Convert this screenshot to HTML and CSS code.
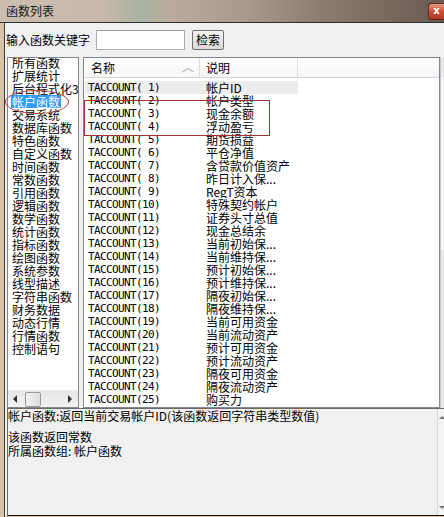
FILE: index.html
```html
<!DOCTYPE html>
<html lang="zh-CN">
<head>
<meta charset="utf-8">
<title>函数列表</title>
<link rel="stylesheet" href="styles.css">
</head>
<body>
<div class="titlebar">
  <span class="title">函数列表</span>
  <span class="close">x</span>
</div>
<div class="win">
  <div class="frame-l"></div>
  <div class="client">
    <div class="search">
      <span class="label">输入函数关键字</span>
      <div class="input"></div>
      <div class="btn">检索</div>
    </div>
    <div class="main">
      <div class="list">
        <div class="items">
          <div class="item">所有函数</div>
          <div class="item">扩展统计</div>
          <div class="item">后台程式化3</div>
          <div class="item sel"><span>帐户函数</span></div>
          <div class="item">交易系统</div>
          <div class="item">数据库函数</div>
          <div class="item">特色函数</div>
          <div class="item">自定义函数</div>
          <div class="item">时间函数</div>
          <div class="item">常数函数</div>
          <div class="item">引用函数</div>
          <div class="item">逻辑函数</div>
          <div class="item">数学函数</div>
          <div class="item">统计函数</div>
          <div class="item">指标函数</div>
          <div class="item">绘图函数</div>
          <div class="item">系统参数</div>
          <div class="item">线型描述</div>
          <div class="item">字符串函数</div>
          <div class="item">财务数据</div>
          <div class="item">动态行情</div>
          <div class="item">行情函数</div>
          <div class="item">控制语句</div>
        </div>
        <div class="hscroll">
          <span class="arr-l"></span>
          <span class="thumb"></span>
          <span class="track"></span>
          <span class="arr-r"></span>
        </div>
      </div>
      <div class="table">
        <div class="thead">
          <div class="h1">名称<span class="sort">︿</span></div>
          <div class="h2">说明</div>
          <div class="h3"></div>
        </div>
        <div class="tbody">
          <div class="row first"><span class="c1">TACCOUNT( 1)</span><span class="c2">帐户ID</span></div>
          <div class="row"><span class="c1">TACCOUNT( 2)</span><span class="c2">帐户类型</span></div>
          <div class="row"><span class="c1">TACCOUNT( 3)</span><span class="c2">现金余额</span></div>
          <div class="row"><span class="c1">TACCOUNT( 4)</span><span class="c2">浮动盈亏</span></div>
          <div class="row"><span class="c1">TACCOUNT( 5)</span><span class="c2">期货损益</span></div>
          <div class="row"><span class="c1">TACCOUNT( 6)</span><span class="c2">平仓净值</span></div>
          <div class="row"><span class="c1">TACCOUNT( 7)</span><span class="c2">含贷款价值资产</span></div>
          <div class="row"><span class="c1">TACCOUNT( 8)</span><span class="c2">昨日计入保...</span></div>
          <div class="row"><span class="c1">TACCOUNT( 9)</span><span class="c2">RegT资本</span></div>
          <div class="row"><span class="c1">TACCOUNT(10)</span><span class="c2">特殊契约帐户</span></div>
          <div class="row"><span class="c1">TACCOUNT(11)</span><span class="c2">证券头寸总值</span></div>
          <div class="row"><span class="c1">TACCOUNT(12)</span><span class="c2">现金总结余</span></div>
          <div class="row"><span class="c1">TACCOUNT(13)</span><span class="c2">当前初始保...</span></div>
          <div class="row"><span class="c1">TACCOUNT(14)</span><span class="c2">当前维持保...</span></div>
          <div class="row"><span class="c1">TACCOUNT(15)</span><span class="c2">预计初始保...</span></div>
          <div class="row"><span class="c1">TACCOUNT(16)</span><span class="c2">预计维持保...</span></div>
          <div class="row"><span class="c1">TACCOUNT(17)</span><span class="c2">隔夜初始保...</span></div>
          <div class="row"><span class="c1">TACCOUNT(18)</span><span class="c2">隔夜维持保...</span></div>
          <div class="row"><span class="c1">TACCOUNT(19)</span><span class="c2">当前可用资金</span></div>
          <div class="row"><span class="c1">TACCOUNT(20)</span><span class="c2">当前流动资产</span></div>
          <div class="row"><span class="c1">TACCOUNT(21)</span><span class="c2">预计可用资金</span></div>
          <div class="row"><span class="c1">TACCOUNT(22)</span><span class="c2">预计流动资产</span></div>
          <div class="row"><span class="c1">TACCOUNT(23)</span><span class="c2">隔夜可用资金</span></div>
          <div class="row"><span class="c1">TACCOUNT(24)</span><span class="c2">隔夜流动资产</span></div>
          <div class="row"><span class="c1">TACCOUNT(25)</span><span class="c2">购买力</span></div>
        </div>
      </div>
      <div class="vstrip"><div class="vthumb"></div></div>
      <div class="ring"></div>
      <div class="mark"></div>
    </div>
    <div class="desc">
      <div class="dtext">
        <div class="dline">帐户函数:返回当前交易帐户ID(该函数返回字符串类型数值)</div>
        <div class="dline gap">该函数返回常数</div>
        <div class="dline">所属函数组: 帐户函数</div>
      </div>
      <div class="dscroll">
        <span class="up"></span>
        <span class="down"></span>
      </div>
    </div>
  </div>
</div>
</body>
</html>
```

FILE: styles.css
```css
* { box-sizing: border-box; }
html, body { margin: 0; padding: 0; }
body {
  width: 444px;
  height: 517px;
  overflow: hidden;
  background: #d6bfa4;
  font-family: "Noto Sans CJK SC", "Noto Sans", sans-serif;
  font-size: 12px;
  color: #000;
}
.titlebar {
  height: 22px;
  display: flex;
  align-items: flex-start;
  justify-content: space-between;
  background: linear-gradient(90deg, #cbbdb0 0%, #c6b8aa 24%, #a7b2a2 32%, #b9ab9d 38%, #a89a8c 55%, #8c7d71 72%, #76685d 88%, #6a5c52 100%);
}
.title {
  padding-left: 6px;
  line-height: 22px;
  font-size: 12px;
  color: #1a1a1a;
}
.close {
  width: 16px;
  height: 17px;
  margin-top: 3px;
  border: 1px solid #5a2a20;
  border-right: none;
  border-radius: 3px 0 0 3px;
  background: linear-gradient(#e59a86, #c9513a 50%, #b33a24);
  color: #fff;
  font-family: "DejaVu Sans", sans-serif;
  font-weight: bold;
  font-size: 10px;
  line-height: 14px;
  text-align: center;
}
.win {
  display: flex;
  height: 495px;
  border-top: 1px solid #2f2f2f;
}
.frame-l {
  flex: none;
  width: 5px;
  background: #d9c2a7;
  border-right: 1px solid #3a3a3a;
}
.client {
  flex: none;
  width: 439px;
  height: 493px;
  background: #f0f0f0;
  display: flex;
  flex-direction: column;
}
.search {
  display: flex;
  align-items: center;
  height: 20px;
  margin-top: 7px;
  padding-left: 1px;
}
.label {
  width: 90px;
  line-height: 20px;
  white-space: nowrap;
}
.input {
  width: 89px;
  height: 20px;
  border: 1px solid #abadb3;
  border-top-color: #a0a0a0;
  background: #fff;
}
.btn {
  margin-left: 7px;
  width: 32px;
  height: 20px;
  border: 1px solid #707070;
  border-radius: 2px;
  background: linear-gradient(#f4f4f4, #e7e7e7 50%, #dadada);
  text-align: center;
  line-height: 18px;
}
.main {
  position: relative;
  display: flex;
  height: 351px;
  margin-top: 7px;
}
.list {
  flex: none;
  margin-left: 2px;
  width: 72px;
  border: 1px solid #828790;
  background: #fff;
  display: flex;
  flex-direction: column;
  overflow: hidden;
}
.items {
  flex: 1;
  overflow: hidden;
  padding-left: 4px;
  margin-top: -2px;
}
.item {
  height: 13px;
  line-height: 13px;
  white-space: nowrap;
}
.item.sel span {
  display: inline-block;
  background: #3399ff;
  color: #fff;
  padding: 0 1px;
  margin-left: -1px;
}
.hscroll {
  flex: none;
  height: 17px;
  display: flex;
  align-items: center;
  background: linear-gradient(#e6e6e6, #f2f2f2);
  border-top: 1px solid #ececec;
}
.arr-l {
  width: 0;
  height: 0;
  margin-left: 5px;
  border-top: 4px solid transparent;
  border-bottom: 4px solid transparent;
  border-right: 4px solid #333;
}
.thumb {
  width: 16px;
  height: 15px;
  margin-left: 8px;
  border: 1px solid #9b9b9b;
  border-radius: 2px;
  background: linear-gradient(90deg, #f2f2f2, #dedede);
}
.track { flex: 1; }
.arr-r {
  width: 0;
  height: 0;
  margin-right: 6px;
  border-top: 4px solid transparent;
  border-bottom: 4px solid transparent;
  border-left: 4px solid #333;
}
.table {
  flex: none;
  margin-left: 4px;
  width: 357px;
  border: 1px solid #828790;
  background: #fff;
  overflow: hidden;
}
.thead {
  display: flex;
  height: 20px;
  border-bottom: 1px solid #d5d5d5;
  background: linear-gradient(#ffffff, #f4f5f6);
  line-height: 19px;
}
.h1 {
  position: relative;
  width: 116px;
  padding-left: 7px;
  border-right: 1px solid #dcdcdc;
}
.sort {
  position: absolute;
  left: 98px;
  top: -1px;
  color: #a8a8a8;
  font-size: 12px;
}
.h2 {
  width: 98px;
  padding-left: 6px;
  border-right: 1px solid #dcdcdc;
}
.h3 { flex: 1; }
.tbody { padding-top: 3px; }
.row {
  display: flex;
  height: 13px;
  line-height: 13px;
  white-space: nowrap;
}
.c1 {
  width: 116px;
  padding-left: 4px;
  font-family: "DejaVu Sans Mono", monospace;
  font-size: 11px;
  letter-spacing: -0.62px;
  color: #000;
}
.c2 {
  width: 98px;
  padding-left: 6px;
  overflow: hidden;
}
.row.first .c1, .row.first .c2 { background: #ececec; }
.row.first .c1 { margin-left: 1px; width: 115px; padding-left: 3px; }
.vstrip {
  flex: none;
  width: 4px;
  background: #e9e9e9;
  border-left: 1px solid #c8c8c8;
  padding-top: 20px;
}
.vthumb {
  height: 173px;
  background: #f6f6f6;
}
.ring {
  position: absolute;
  left: 0;
  top: 33px;
  width: 64px;
  height: 24px;
  border: 1px solid #b24848;
  border-radius: 50%;
}
.mark {
  position: absolute;
  left: 79px;
  top: 43px;
  width: 186px;
  height: 36px;
  border: 1px solid #a83030;
}
.desc {
  margin-left: 2px;
  width: 437px;
  height: 108px;
  display: flex;
  border: 1px solid #6a6a6a;
  border-right: none;
  border-bottom-color: #111;
  background: #f0f0f0;
}
.dtext {
  width: 429px;
}
.dline {
  height: 14px;
  line-height: 14px;
  white-space: nowrap;
}
.dline.gap { margin-top: 7px; }
.dscroll {
  flex: none;
  width: 7px;
  border-left: 1px solid #dadada;
  background: #f4f4f4;
  display: flex;
  flex-direction: column;
  justify-content: space-between;
  align-items: flex-start;
  padding: 7px 0 6px 1px;
}
.up {
  width: 0;
  height: 0;
  border-left: 3px solid transparent;
  border-right: 3px solid transparent;
  border-bottom: 3px solid #777;
}
.down {
  width: 0;
  height: 0;
  border-left: 3px solid transparent;
  border-right: 3px solid transparent;
  border-top: 3px solid #777;
}
```
